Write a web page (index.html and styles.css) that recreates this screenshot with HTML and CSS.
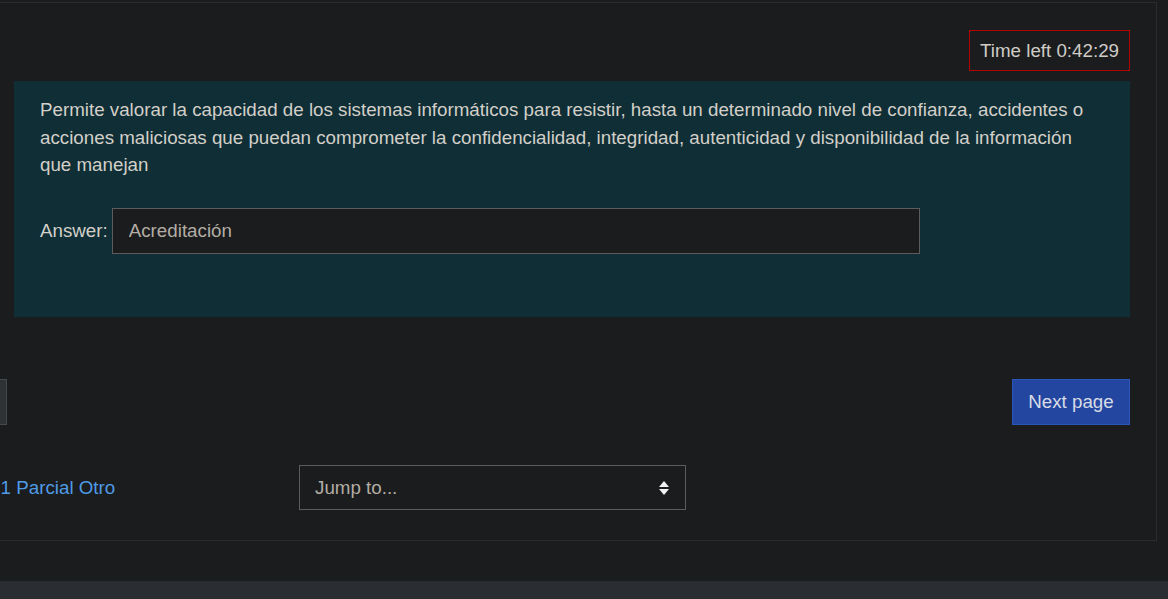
FILE: index.html
```html
<!DOCTYPE html>
<html lang="es">
<head>
<meta charset="utf-8">
<title>Quiz</title>
<link rel="stylesheet" href="styles.css">
</head>
<body>
<div class="viewport">
  <div class="region">
    <div class="timer-row">
      <div class="timer">Time left 0:42:29</div>
    </div>
    <div class="que">
      <div class="que-info"></div>
      <div class="formulation">
        <div class="qtext">Permite valorar la capacidad de los sistemas informáticos para resistir, hasta un determinado nivel de confianza, accidentes o acciones maliciosas que puedan comprometer la confidencialidad, integridad, autenticidad y disponibilidad de la información que manejan</div>
        <div class="answer-row">
          <label class="answer-label" for="ans">Answer:</label>
          <input class="answer-input" id="ans" type="text" value="Acreditación">
        </div>
      </div>
    </div>
    <div class="submit-row">
      <button class="btn btn-secondary" type="button">Previous page</button>
      <button class="btn btn-primary" type="button">Next page</button>
    </div>
    <div class="activity-nav">
      <div class="nav-col"><a class="prev-link" href="#">◄ Cuestionarios 1 Parcial Otro</a></div>
      <div class="nav-col">
        <div class="jump">
          <span class="jump-text">Jump to...</span>
          <svg class="jump-arrows" width="10" height="14" viewBox="0 0 10 14"><path d="M5 0 L10 6 L0 6 Z" fill="#f2f2f2"/><path d="M0 8 L10 8 L5 14 Z" fill="#f2f2f2"/></svg>
        </div>
      </div>
      <div class="nav-col"></div>
    </div>
  </div>
  <div class="footer-gap"></div>
  <div class="footer-bar"></div>
</div>
</body>
</html>
```

FILE: styles.css
```css
html, body {
  margin: 0;
  padding: 0;
  background: #1b1c1e;
  overflow: hidden;
}
body {
  font-family: "Liberation Sans", Arial, sans-serif;
  font-size: 18.75px;
  line-height: 27.5px;
  color: #d3cfc9;
  width: 1168px;
  height: 599px;
}
.viewport {
  padding-top: 2px;
}
.region {
  box-sizing: border-box;
  width: 1325px;
  height: 539px;
  margin-left: -168px;
  border: 1px solid #2c2d28;
  padding: 27px 26px 0 25px;
}
.timer-row {
  display: flex;
  justify-content: flex-end;
}
.timer {
  border: 1px solid #b30000;
  padding: 5.75px 10px;
  color: #d0ccc6;
  white-space: nowrap;
}
.que {
  display: flex;
  margin-top: 10px;
}
.que-info {
  width: 156px;
  flex: none;
}
.formulation {
  flex: 1;
  background: #0f2e35;
  padding: 15px 26px 63px 26px;
  min-width: 0;
}
.qtext {
  margin-bottom: 29.5px;
}
.answer-row {
  display: flex;
  align-items: center;
}
.answer-label {
  margin-right: 4px;
}
.answer-input {
  box-sizing: border-box;
  width: 808px;
  height: 46px;
  background: #1b1c1e;
  border: 1px solid #5c5c5c;
  padding: 0 16px;
  font-family: "Liberation Sans", Arial, sans-serif;
  font-size: 18.75px;
  color: #b3ada4;
  outline: none;
}
.submit-row {
  display: flex;
  justify-content: space-between;
  margin-top: 62px;
}
.btn {
  box-sizing: border-box;
  height: 46px;
  padding: 0;
  font-family: "Liberation Sans", Arial, sans-serif;
  font-size: 18.75px;
  border-radius: 0;
  white-space: nowrap;
  text-align: center;
}
.btn-secondary {
  width: 149px;
  background: #2e3235;
  border: 1px solid #45494d;
  color: #d3cfc9;
}
.btn-primary {
  width: 118px;
  background: #2346a0;
  border: 1px solid #2c55bb;
  color: #d8dce6;
}
.activity-nav {
  display: grid;
  grid-template-columns: 390px 390px 1fr;
  column-gap: 51px;
  margin-top: 40px;
  align-items: center;
}
.prev-link {
  color: #4f9be6;
  text-decoration: none;
  white-space: nowrap;
  margin-left: -1px;
}
.jump {
  box-sizing: border-box;
  width: 387px;
  height: 45px;
  border: 1px solid #5c5c5c;
  display: flex;
  align-items: center;
  justify-content: space-between;
  padding: 0 16px 0 15px;
  background: #1b1c1e;
}
.jump-text {
  color: #b3ada4;
}
.jump-arrows {
  display: block;
}
.footer-gap {
  height: 40px;
}
.footer-bar {
  height: 30px;
  background: #2a2e32;
}
```
